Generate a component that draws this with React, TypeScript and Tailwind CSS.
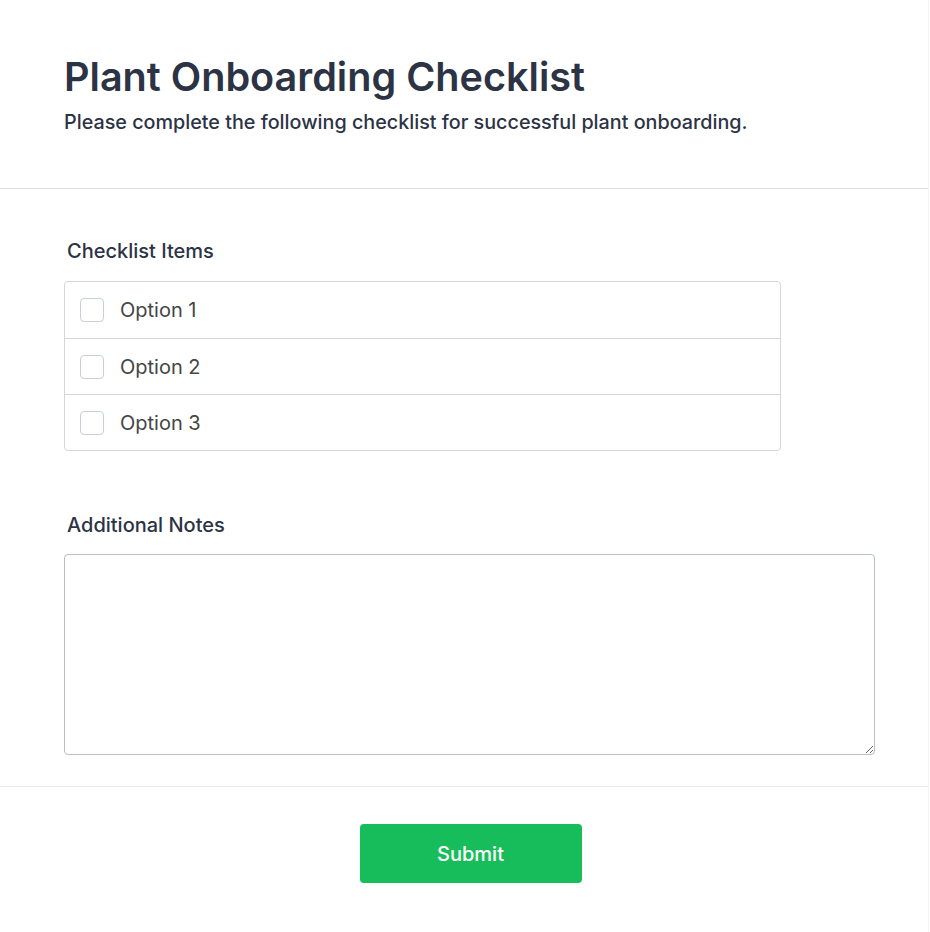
import { useState } from 'react';

const OPTIONS = ['Option 1', 'Option 2', 'Option 3'];

const App = () => {
  const [checked, setChecked] = useState<string[]>([]);
  const [notes, setNotes] = useState('');

  const toggle = (opt: string) => {
    setChecked((prev) =>
      prev.includes(opt) ? prev.filter((o) => o !== opt) : [...prev, opt]
    );
  };

  return (
    <div
      className="min-h-[932px] w-[930px] bg-white text-[#2c3345]"
      style={{ fontFamily: 'Inter, "Noto Sans", sans-serif' }}
    >
      <div className="w-[929px] min-h-[932px] border-r border-[#f3f3f6]">
        <div className="px-16 pt-[53px] pb-[52px] border-b border-[#dcdde8]">
          <h1 className="text-[39.6px] leading-[48px] font-semibold">Plant Onboarding Checklist</h1>
          <p className="mt-[7px] text-[19.75px] leading-[28px] font-medium">
            Please complete the following checklist for successful plant onboarding.
          </p>
        </div>

        <div className="px-16 pt-[48px] pb-[31px] border-b border-[#ececf0]">
          <div className="pl-[3px] text-[20px] leading-[28px] font-medium">Checklist Items</div>
          <div className="mt-[16px] w-[717px] rounded border border-[#d6d6d6]">
            {OPTIONS.map((opt, i) => (
              <label
                key={opt}
                className={`flex h-[56px] cursor-pointer items-center gap-4 px-[15px] ${
                  i > 0 ? 'border-t border-[#d6d6d6]' : ''
                }`}
              >
                <span
                  onClick={() => toggle(opt)}
                  className={`h-[24px] w-[24px] rounded border ${
                    checked.includes(opt) ? 'border-[#18bd5b] bg-[#18bd5b]' : 'border-[#c8ceda] bg-white'
                  }`}
                />
                <span className="text-[20px] text-[#454545]">{opt}</span>
              </label>
            ))}
          </div>

          <div className="mt-[60px] pl-[3px] text-[20px] leading-[28px] font-medium">Additional Notes</div>
          <textarea
            value={notes}
            onChange={(e) => setNotes(e.target.value)}
            className="mt-[15px] block h-[201px] w-[811px] rounded border border-[#b8bdc9] p-3 text-[16px] outline-none"
          />
        </div>

        <div className="flex justify-center pl-[13px] pt-[37px]">
          <button className="h-[59px] w-[222px] rounded bg-[#18bd5b] text-[20px] font-medium text-white">
            Submit
          </button>
        </div>
      </div>
    </div>
  );
};

export default App;
